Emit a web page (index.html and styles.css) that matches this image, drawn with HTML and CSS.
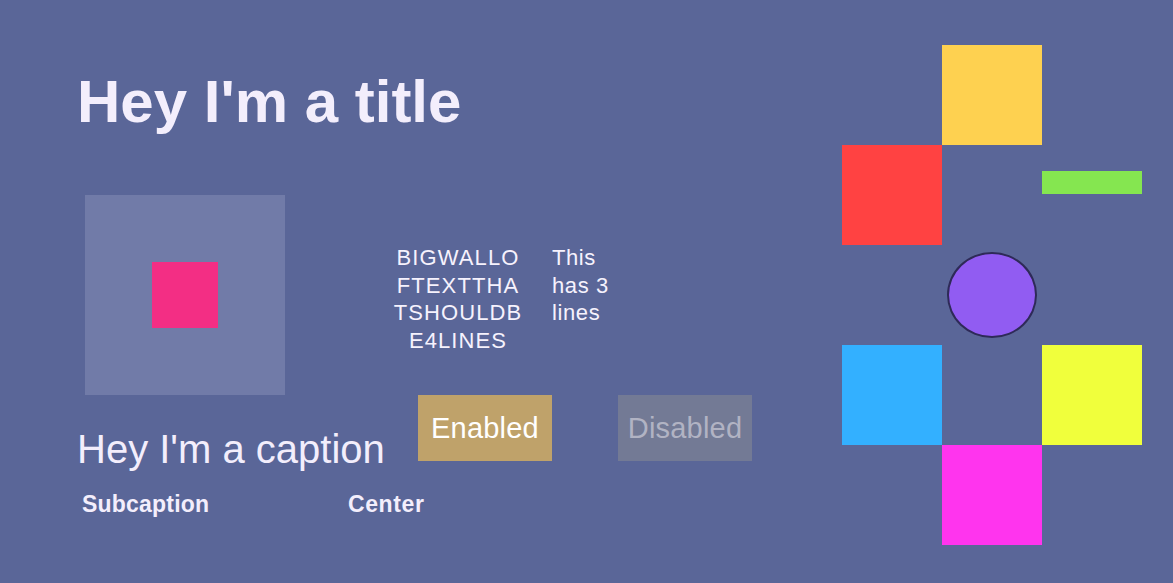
FILE: index.html
```html
<!DOCTYPE html>
<html>
<head>
<meta charset="utf-8">
<link rel="stylesheet" href="styles.css">
</head>
<body>
<div class="page">
  <section class="left">
    <h1 class="title">Hey I'm a title</h1>
    <div class="row-mid">
      <div class="panel"><div class="panel-dot"></div></div>
      <div class="wall">BIGWALLO<br>FTEXTTHA<br>TSHOULDB<br>E4LINES</div>
      <div class="three">This<br>has 3<br>lines</div>
    </div>
    <div class="row-bottom">
      <div class="captions">
        <div class="caption">Hey I'm a caption</div>
        <div class="subrow">
          <span class="sub">Subcaption</span>
          <span class="sub sub-center">Center</span>
        </div>
      </div>
      <div class="btn btn-enabled">Enabled</div>
      <div class="btn btn-disabled">Disabled</div>
    </div>
  </section>
  <section class="shapes">
    <div class="cell"></div>
    <div class="cell yellow"></div>
    <div class="cell"></div>
    <div class="cell red"></div>
    <div class="cell"></div>
    <div class="cell"><div class="bar"></div></div>
    <div class="cell"></div>
    <div class="cell center"><div class="circle"></div></div>
    <div class="cell"></div>
    <div class="cell blue"></div>
    <div class="cell"></div>
    <div class="cell lime"></div>
    <div class="cell"></div>
    <div class="cell magenta"></div>
    <div class="cell"></div>
  </section>
</div>
</body>
</html>
```

FILE: styles.css
```css
html, body {
  margin: 0;
  padding: 0;
}
body {
  background: #5a6698;
  font-family: "Liberation Sans", Arial, sans-serif;
  color: #f3eefc;
  width: 1173px;
  height: 583px;
  overflow: hidden;
}
.page {
  display: flex;
  height: 583px;
}
.left {
  flex: 0 0 842px;
  display: flex;
  flex-direction: column;
}
.title {
  margin: 72px 0 0 77px;
  font-size: 60px;
  line-height: 60px;
  font-weight: bold;
}
.row-mid {
  display: flex;
  margin-top: 63px;
  height: 200px;
}
.panel {
  margin-left: 85px;
  width: 200px;
  height: 200px;
  background: #717ba8;
  display: flex;
  align-items: center;
  justify-content: center;
}
.panel-dot {
  width: 66px;
  height: 66px;
  background: #f32e84;
}
.wall {
  margin: 49px 0 0 103px;
  width: 140px;
  text-align: center;
  font-size: 22px;
  line-height: 27.5px;
  letter-spacing: 1.1px;
  color: #f6f2fd;
}
.three {
  margin: 49px 0 0 24px;
  font-size: 22px;
  line-height: 27.5px;
  letter-spacing: 0.6px;
  color: #f6f2fd;
}
.row-bottom {
  display: flex;
  align-items: flex-start;
}
.captions {
  margin-left: 77px;
  width: 341px;
  padding-top: 34px;
}
.caption {
  font-size: 40px;
  line-height: 40px;
}
.subrow {
  display: grid;
  grid-template-columns: 266px auto;
  padding-left: 5px;
  margin-top: 24px;
}
.sub {
  font-size: 23px;
  line-height: 23px;
  font-weight: bold;
  letter-spacing: 0.2px;
}
.sub-center {
  letter-spacing: 0.6px;
}
.btn {
  width: 134px;
  height: 66px;
  display: flex;
  align-items: center;
  justify-content: center;
  font-size: 29px;
  letter-spacing: 0.2px;
}
.btn-enabled {
  background: #bfa26a;
  color: #ffffff;
}
.btn-disabled {
  margin-left: 66px;
  background: #737a95;
  color: #b1b3c3;
}
.shapes {
  margin-top: 45px;
  display: grid;
  grid-template-columns: repeat(3, 100px);
  grid-template-rows: repeat(5, 100px);
  align-self: flex-start;
}
.cell {
  width: 100px;
  height: 100px;
}
.yellow { background: #fed150; }
.red { background: #ff4242; }
.blue { background: #33b0ff; }
.lime { background: #f0ff3c; }
.magenta { background: #ff34ee; }
.bar {
  margin-top: 26px;
  height: 23px;
  background: #85e650;
}
.center {
  display: flex;
  align-items: center;
  justify-content: center;
}
.circle {
  width: 86px;
  height: 82px;
  border-radius: 50%;
  background: #915cf2;
  border: 2px solid #2e2a58;
}
```
